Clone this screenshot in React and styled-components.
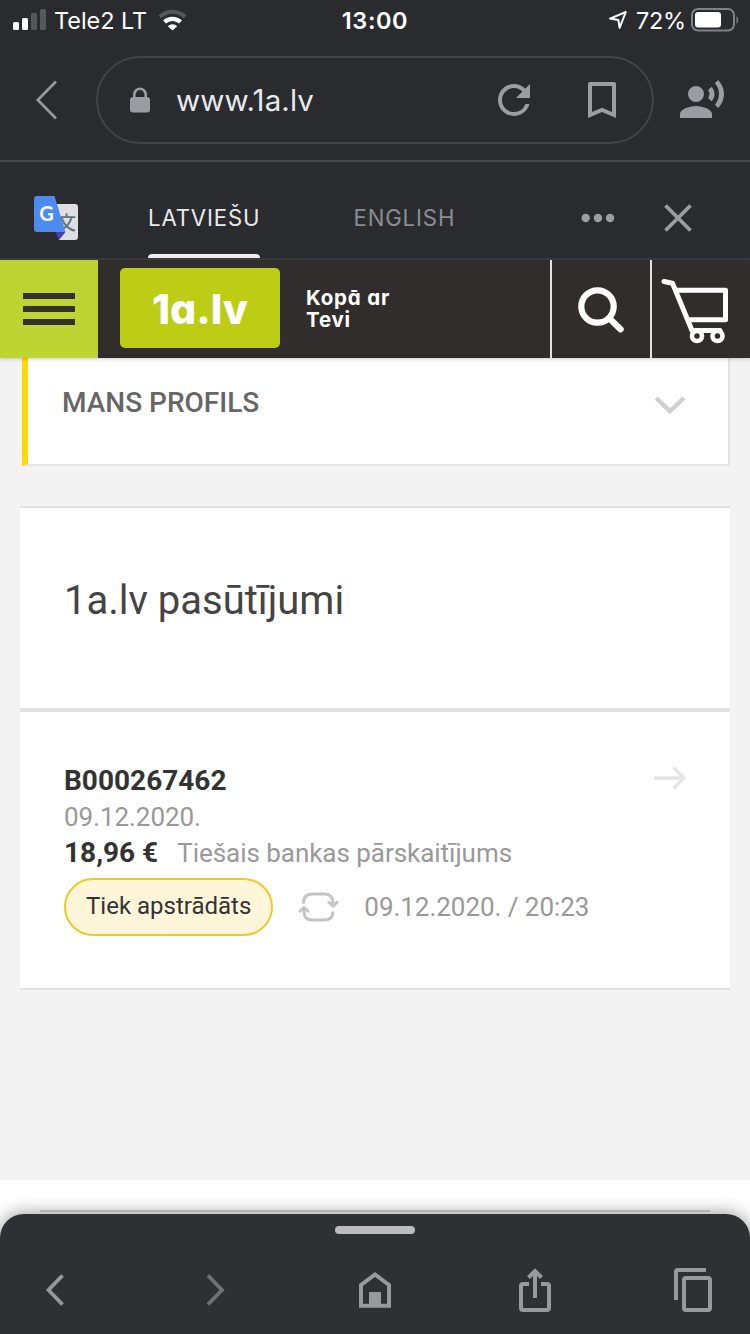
import styled, { createGlobalStyle } from "styled-components";

export default function App() {
  return (
    <>
      <GlobalStyle />
      <Screen>
        <StatusBar>
          <StatusGroup>
            <SignalIcon />
            <Carrier>Tele2 LT</Carrier>
            <WifiIcon />
          </StatusGroup>
          <Clock>13:00</Clock>
          <StatusGroup $end>
            <LocationIcon />
            <Percent>72%</Percent>
            <BatteryIcon />
          </StatusGroup>
        </StatusBar>

        <AddressBar>
          <Svg $w={22} $h={42} viewBox="0 0 22 42">
            <path d="M20 2.5 1.8 21 20 39.5" stroke="#97999c" strokeWidth="2.6" />
          </Svg>
          <AddressField>
            <LockIcon />
            <Url>www.1a.lv</Url>
            <FieldActions>
              <MaterialIcon d="M17.65 6.35A7.958 7.958 0 0 0 12 4c-4.42 0-7.99 3.58-7.99 8s3.57 8 7.99 8c3.73 0 6.84-2.55 7.73-6h-2.08A5.99 5.99 0 0 1 12 18c-3.31 0-6-2.69-6-6s2.69-6 6-6c1.66 0 3.14.69 4.22 1.78L13 11h7V4z" />
              <MaterialIcon d="M18 3H6c-.6 0-1 .4-1 1v17l7-3 7 3V4c0-.6-.4-1-1-1zm-1 15-5-2.18L7 18V5h10z" />
            </FieldActions>
          </AddressField>
          <MaterialIcon d="M13 9a4 4 0 1 1-8 0 4 4 0 0 1 8 0zM9 15c-2.67 0-8 1.34-8 4v2h16v-2c0-2.66-5.33-4-8-4zM16.76 5.36l-1.68 1.69c.84 1.18.84 2.71 0 3.89l1.68 1.69c2.02-2.02 2.02-5.07 0-7.27zM20.07 2l-1.63 1.63c2.77 3.02 2.77 7.56 0 10.74L20.07 16c3.9-3.89 3.91-9.95 0-14z" />
        </AddressBar>

        <TranslateBar>
          <TranslateIcon />
          <Language $active $left={70}>LATVIEŠU</Language>
          <Language $left={93}>ENGLISH</Language>
          <TranslateActions>
            <Svg $w={34} $h={10} viewBox="0 0 34 10">
              <circle cx="4.7" cy="5" r="4.2" fill="#9a9da2" />
              <circle cx="17" cy="5" r="4.2" fill="#9a9da2" />
              <circle cx="29" cy="5" r="4.2" fill="#9a9da2" />
            </Svg>
            <Svg $w={30} $h={30} viewBox="0 0 30 30">
              <path d="M2.5 2.5l25 25M27.5 2.5l-25 25" stroke="#9a9da2" strokeWidth="3.8" />
            </Svg>
          </TranslateActions>
        </TranslateBar>

        <ShopHeader>
          <MenuButton>
            <MenuLine />
            <MenuLine />
            <MenuLine />
          </MenuButton>
          <Logo>1a.lv</Logo>
          <Slogan>
            Kopā ar
            <br />
            Tevi
          </Slogan>
          <HeaderButton>
            <SearchIcon />
          </HeaderButton>
          <HeaderButton>
            <CartIcon />
          </HeaderButton>
        </ShopHeader>

        <Content>
          <ProfileCard>
            <ProfileTitle>MANS PROFILS</ProfileTitle>
            <Svg $w={32} $h={20} viewBox="0 0 32 20">
              <path d="M2.2 3 16 16.2 29.8 3" stroke="#d0d0d0" strokeWidth="4.4" />
            </Svg>
          </ProfileCard>

          <OrdersCard>
            <OrdersTitle>1a.lv pasūtījumi</OrdersTitle>
            <Order>
              <OrderInfo>
                <OrderNumber>B000267462</OrderNumber>
                <OrderDate>09.12.2020.</OrderDate>
                <Payment>
                  <Price>18,96 €</Price>
                  <Muted>Tiešais bankas pārskaitījums</Muted>
                </Payment>
                <StatusRow>
                  <Status>Tiek apstrādāts</Status>
                  <UpdateIcon />
                  <Muted>09.12.2020. / 20:23</Muted>
                </StatusRow>
              </OrderInfo>
              <Svg $w={34} $h={26} viewBox="0 0 34 26">
                <path d="M0 13h30M19.5 2.5 30 13 19.5 23.5" stroke="#e5e5e5" strokeWidth="3.4" />
              </Svg>
            </Order>
          </OrdersCard>
        </Content>

        <Footer>
          <FooterLine />
          <BottomNav>
            <Handle />
            <NavIcons>
              <Svg $w={44} $h={48} viewBox="0 0 44 48">
                <path d="M29.5 9.5 15.5 24l14 14.5" stroke="#97999d" strokeWidth="3.8" />
              </Svg>
              <Svg $w={44} $h={48} viewBox="0 0 44 48">
                <path d="M15 9.5 29 24l-14 14.5" stroke="#717276" strokeWidth="3.8" />
              </Svg>
              <Svg $w={44} $h={48} viewBox="0 0 44 48">
                <path d="M8 39.8V19L22 8.5 36 19v20.8z" stroke="#97999d" strokeWidth="4" />
                <path d="M16 26h12v13H16z" fill="#97999d" />
              </Svg>
              <Svg $w={44} $h={48} viewBox="-1 0 44 48">
                <path
                  d="M16 18h-6q-2 0-2 2v22q0 2 2 2h24q2 0 2-2V20q0-2-2-2h-6M22 32V5M15.5 11.5 22 5l6.5 6.5"
                  stroke="#97999d"
                  strokeWidth="4"
                />
              </Svg>
              <Svg $w={44} $h={48} viewBox="1 0 44 48">
                <path
                  d="M5 34V6q0-2 2-2h28M15 12h22q2 0 2 2v28q0 2-2 2H15q-2 0-2-2V14q0-2 2-2z"
                  stroke="#97999d"
                  strokeWidth="4"
                />
              </Svg>
            </NavIcons>
          </BottomNav>
        </Footer>
      </Screen>
    </>
  );
}

function MaterialIcon({ d }) {
  return (
    <Svg $w={48} $h={48} viewBox="0 0 24 24">
      <path d={d} fill="#9a9da2" />
    </Svg>
  );
}

function SignalIcon() {
  return (
    <Svg $w={34} $h={22} viewBox="0 0 34 22">
      <rect x="0" y="13" width="6" height="8" rx="1.5" fill="#fff" />
      <rect x="9" y="9" width="6" height="12" rx="1.5" fill="#fff" />
      <rect x="18" y="4" width="6" height="17" rx="1.5" fill="#56575a" />
      <rect x="27" y="0" width="6" height="21" rx="1.5" fill="#56575a" />
    </Svg>
  );
}

function WifiIcon() {
  return (
    <Svg $w={30} $h={22} viewBox="0 0 30 22">
      <path d="M1.8 7.8a18.5 18.5 0 0 1 25.4 0" stroke="#56575a" strokeWidth="4" />
      <path d="M6.5 13a11.8 11.8 0 0 1 16 0" stroke="#fff" strokeWidth="4.2" />
      <path d="M14.5 21.5 9.8 17.2a6.8 6.8 0 0 1 9.4 0z" fill="#fff" />
    </Svg>
  );
}

function LocationIcon() {
  return (
    <Svg $w={20} $h={20} viewBox="0 0 20 20">
      <path d="M2 8.6 17.8 2 11.6 17.8 10.4 10z" stroke="#fff" strokeWidth="2" strokeLinejoin="round" />
    </Svg>
  );
}

function BatteryIcon() {
  return (
    <Svg $w={49} $h={24} viewBox="0 0 49 24">
      <rect x="1" y="1" width="42" height="21.5" rx="6" stroke="#808184" strokeWidth="2" />
      <rect x="4" y="4" width="26" height="15.5" rx="3" fill="#fff" />
      <path d="M45.5 8q3.6 3.8 0 8z" fill="#808184" />
    </Svg>
  );
}

function LockIcon() {
  return (
    <Svg $w={20} $h={26} viewBox="0 0 20 26">
      <path d="M4.3 12V7.5a5.7 5.7 0 0 1 11.4 0V12" stroke="#9a9da2" strokeWidth="2.6" />
      <rect x="0" y="10" width="20" height="15.5" rx="3" fill="#9a9da2" />
    </Svg>
  );
}

function TranslateIcon() {
  return (
    <Svg $w={44} $h={44} viewBox="0 0 44 44">
      <path d="M20 8h21q3 0 3 3v30q0 3-3 3H25z" fill="#dedfe0" />
      <text x="23" y="33.5" fontSize="19" fontWeight="500" fill="#65777d" fontFamily="Noto Sans CJK JP, sans-serif">
        文
      </text>
      <path d="M21.5 36h10L25 44z" fill="#4340b5" />
      <path d="M3 0h17.5l11 36H3q-3 0-3-3V3q0-3 3-3z" fill="#4c8bf0" />
      <text x="5.2" y="24.7" fontSize="20" fontWeight="700" fill="#fff" fontFamily="Lato, sans-serif">
        G
      </text>
    </Svg>
  );
}

function SearchIcon() {
  return (
    <Svg $w={48} $h={48} viewBox="0 0 48 48">
      <circle cx="20.5" cy="21.5" r="16.2" stroke="#fff" strokeWidth="6.2" />
      <path d="M33 34 43.5 44.3" stroke="#fff" strokeWidth="6.4" strokeLinecap="round" />
    </Svg>
  );
}

function CartIcon() {
  return (
    <Svg $w={70} $h={68} viewBox="6 0 70 68">
      <path
        d="M4 6.5 12.5 8.2 32 55.5h28M17 15.3h48.5v29.5H29"
        stroke="#fff"
        strokeWidth="5"
        strokeLinecap="round"
        strokeLinejoin="round"
      />
      <circle cx="37" cy="61" r="5" fill="#312d2c" stroke="#fff" strokeWidth="4.6" />
      <circle cx="57.5" cy="61" r="5" fill="#312d2c" stroke="#fff" strokeWidth="4.6" />
    </Svg>
  );
}

function UpdateIcon() {
  return (
    <Svg $w={42} $h={32} viewBox="0 0 42 32" stroke="#c4c4c4" strokeWidth="3">
      <path d="M5.5 12.5c0-6.5 3-9.5 9-9.5H26.500c6 0 8.5 3 8.5 9v2M30 10.5l5 4.5 5-4.500" />
      <path d="M35 20.5c0 6-3 8.5-9 8.5H14.500c-6 0-8.500-3-8.500-8v-3M1 21l5-4.500 5 4.500" />
    </Svg>
  );
}

const GlobalStyle = createGlobalStyle`
  * {
    box-sizing: border-box;
  }

  body {
    margin: 0;
    background: #f3f3f3;
    font-family: Roboto, "Liberation Sans", sans-serif;
  }
`;

const Svg = styled.svg`
  display: block;
  flex: none;
  width: ${(props) => props.$w}px;
  height: ${(props) => props.$h}px;
  fill: none;
  overflow: visible;
`;

const Screen = styled.div`
  display: flex;
  flex-direction: column;
  width: 750px;
  height: 1334px;
  overflow: hidden;
`;

const StatusBar = styled.div`
  display: grid;
  grid-template-columns: 1fr auto 1fr;
  align-items: center;
  height: 40px;
  padding: 0 10px 0 13px;
  background: #2a2b2e;
  color: #ffffff;
  font-family: Inter, sans-serif;
  font-size: 23.5px;
`;

const StatusGroup = styled.div`
  display: flex;
  align-items: center;
  justify-content: ${(props) => (props.$end ? "flex-end" : "flex-start")};
`;

const Carrier = styled.span`
  margin: 0 11px 0 7px;
  letter-spacing: -0.05px;
`;

const Clock = styled.span`
  margin-right: 3px;
  font-weight: 600;
  letter-spacing: 0.6px;
`;

const Percent = styled.span`
  margin: 0 5px 0 8px;
  letter-spacing: -0.2px;
`;

const AddressBar = styled.div`
  display: flex;
  align-items: center;
  height: 122px;
  padding: 0 24px 0 36px;
  background: #2a2b2e;
  border-bottom: 2px solid #47484b;
`;

const AddressField = styled.div`
  display: flex;
  align-items: center;
  width: 558px;
  height: 88px;
  margin: 0 24px 0 38px;
  padding: 0 26px 0 32px;
  border: 2px solid #434447;
  border-radius: 44px;
`;

const Url = styled.span`
  margin-left: 26px;
  color: #e8eaed;
  font-family: Inter, sans-serif;
  font-size: 29.5px;
  letter-spacing: 0.1px;
`;

const FieldActions = styled.div`
  display: flex;
  gap: 40px;
  margin-left: auto;
`;

const TranslateBar = styled.div`
  display: flex;
  align-items: center;
  height: 98px;
  padding: 16px 57px 0 34px;
  background: #2a2b2e;
  border-bottom: 2px solid #3c3d40;
`;

const Language = styled.div`
  align-self: stretch;
  margin-left: ${(props) => props.$left}px;
  line-height: 80px;
  color: ${(props) => (props.$active ? "#e8eaed" : "#8b8d92")};
  font-family: Inter, sans-serif;
  font-size: 22.2px;
  letter-spacing: 0.85px;

  &::after {
    content: "";
    display: ${(props) => (props.$active ? "block" : "none")};
    height: 4px;
    margin-top: -4px;
    border-radius: 4px 4px 0 0;
    background: #eeeeee;
  }
`;

const TranslateActions = styled.div`
  display: flex;
  align-items: center;
  gap: 48px;
  margin-left: auto;
`;

const ShopHeader = styled.header`
  position: relative;
  display: flex;
  align-items: center;
  height: 98px;
  background: #312d2c;
  box-shadow: 0 1px 4px rgba(0, 0, 0, 0.2);
`;

const MenuButton = styled.div`
  display: flex;
  flex-direction: column;
  align-items: center;
  justify-content: center;
  gap: 7px;
  width: 98px;
  height: 98px;
  background: #bed433;
`;

const MenuLine = styled.div`
  width: 52px;
  height: 6px;
  background: #33322a;
`;

const Logo = styled.div`
  display: flex;
  align-items: center;
  justify-content: center;
  width: 160px;
  height: 80px;
  margin-left: 22px;
  margin-bottom: 2px;
  padding-top: 1px;
  border-radius: 5px;
  background: #bdcd15;
  color: #ffffff;
  font-family: Inter, sans-serif;
  font-size: 41px;
  font-weight: 800;
  font-feature-settings: "cv11";
`;

const Slogan = styled.div`
  flex: 1;
  margin-left: 26px;
  color: #ffffff;
  font-family: Inter, sans-serif;
  font-size: 20.5px;
  font-weight: 700;
  line-height: 22px;
  letter-spacing: 0.8px;
  font-feature-settings: "cv11";
`;

const HeaderButton = styled.div`
  display: flex;
  align-items: center;
  justify-content: center;
  width: 100px;
  height: 98px;
  border-left: 2px solid #e4e2e0;
`;

const Content = styled.main`
  flex: none;
  height: 822px;
  padding: 0 20px;
  background: #f3f3f3;
`;

const ProfileCard = styled.section`
  display: flex;
  align-items: flex-start;
  justify-content: space-between;
  height: 108px;
  margin-left: 2px;
  padding: 27px 42px 0 34px;
  background: #ffffff;
  border-right: 2px solid #e4e4e4;
  border-bottom: 2px solid #e6e6e6;
  border-left: 6px solid #ffd60a;

  svg {
    margin-top: 10px;
  }
`;

const ProfileTitle = styled.h2`
  margin: 0;
  color: #666666;
  font-size: 28px;
  font-weight: 500;
  line-height: 36px;
`;

const OrdersCard = styled.section`
  height: 484px;
  margin-top: 40px;
  background: #ffffff;
  border-top: 2px solid #e0e0e0;
  border-bottom: 2px solid #e0e0e0;
`;

const OrdersTitle = styled.h1`
  height: 204px;
  margin: 0;
  padding: 69px 44px 0;
  border-bottom: 4px solid #e2e2e2;
  color: #444444;
  font-size: 40px;
  font-weight: 400;
  line-height: 48px;
`;

const Order = styled.div`
  display: flex;
  justify-content: space-between;
  padding: 51px 42px 0 44px;

  > svg {
    margin-top: 2px;
  }
`;

const OrderInfo = styled.div`
  display: flex;
  flex-direction: column;
`;

const OrderNumber = styled.div`
  color: #333333;
  font-size: 28px;
  font-weight: 700;
  line-height: 36px;
`;

const OrderDate = styled.div`
  color: #999999;
  font-size: 26px;
  line-height: 36px;
  letter-spacing: -0.05px;
`;

const Payment = styled.div`
  display: flex;
  align-items: baseline;
  gap: 19px;
  line-height: 36px;
`;

const Price = styled.span`
  color: #333333;
  font-size: 28px;
  font-weight: 700;
`;

const Muted = styled.span`
  color: #999999;
  font-size: 26px;
  letter-spacing: -0.04px;
`;

const StatusRow = styled.div`
  display: flex;
  align-items: center;
  margin-top: 7px;

  svg {
    margin: 0 24px 0 25px;
  }
`;

const Status = styled.span`
  height: 58px;
  padding: 0 20px;
  border: 2px solid #ebcb2a;
  border-radius: 29px;
  background: #fff5d9;
  color: #333333;
  font-size: 24px;
  line-height: 52px;
`;

const Footer = styled.footer`
  flex: 1;
  padding-top: 30px;
  background: #ffffff;
`;

const FooterLine = styled.div`
  height: 2px;
  margin: 0 40px 2px;
  background: #d6d6d6;
`;

const BottomNav = styled.nav`
  position: relative;
  height: 120px;
  padding-top: 12px;
  border-radius: 24px 24px 0 0;
  background: #2f3034;
  box-shadow: 0 0 18px rgba(0, 0, 0, 0.45);
`;

const Handle = styled.div`
  width: 80px;
  height: 8px;
  margin: 0 auto 32px;
  border-radius: 4px;
  background: #bcbcbf;
`;

const NavIcons = styled.div`
  display: flex;
  justify-content: space-between;
  padding: 0 34px 0 33px;
`;
